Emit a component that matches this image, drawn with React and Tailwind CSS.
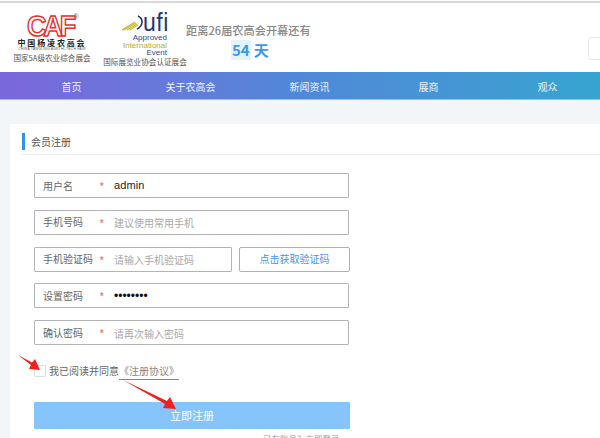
const cjk = "font-['Noto_Sans_CJK_SC','Noto_Sans',sans-serif]";

function Field({ label, value, placeholder, password, className = "w-[315px]" }) {
  return (
    <div className={`flex h-[25px] items-center border border-[#b4b4b4] rounded-[1px] bg-white ${className}`}>
      <span className="w-[56px] pl-[8px] text-[10px] leading-none text-[#666] whitespace-nowrap">{label}</span>
      <span className="w-[23px] pl-[8px] pt-[3px] text-[12px] leading-none text-[#f0706a]">*</span>
      {value ? (
        <span className={`font-['Liberation_Sans',sans-serif] leading-none ${password ? "text-[12px] text-[#111]" : "text-[11px] tracking-[0.1px] text-[#222]"}`}>{value}</span>
      ) : (
        <span className="pt-[2px] text-[10px] leading-none text-[#a8a8a8] whitespace-nowrap">{placeholder}</span>
      )}
    </div>
  );
}

function CafLogo() {
  return (
    <div className="flex w-[84px] flex-col items-center">
      <svg width="58" height="26" viewBox="0 0 58 26" className="ml-[8px]">
        <text x="0" y="24.5" fontFamily="Liberation Sans, sans-serif" fontSize="30" fontWeight="700" fill="#fff" stroke="#e5302c" strokeWidth="1.5" letterSpacing="-3.5" textLength="46" lengthAdjust="spacingAndGlyphs">CAF</text>
        <text x="46" y="8" fontFamily="Liberation Sans, sans-serif" fontSize="8" fill="#777">®</text>
      </svg>
      <span className="mt-[1px] text-[8px] leading-[9px] font-bold tracking-[1.85px] text-[#222] whitespace-nowrap">中国杨凌农高会</span>
      <span className="font-['Liberation_Sans',sans-serif] text-[3.4px] leading-[5px] tracking-[0.2px] text-[#555] whitespace-nowrap">CHINA YANGLING AGRI HI-TECH FAIR</span>
      <span className="mt-[1px] text-[7.6px] leading-[10px] text-[#555] whitespace-nowrap">国家5A级农业综合展会</span>
    </div>
  );
}

function UfiLogo() {
  return (
    <div className="flex w-[84px] flex-col items-center">
      <div className="flex h-[20px] w-[46px] items-end pt-[2px]">
        <svg width="23" height="18" viewBox="0 0 23 18" className="shrink-0">
          <g fill="none" stroke="#c5bb2e" strokeWidth="1.1">
            <path d="M0 17 L13 9" />
            <path d="M2 17 L14 10" />
            <path d="M5 17 L15 11" />
            <path d="M8 17 L16 12" />
          </g>
          <path d="M16 3 C22 6 21 13 15 16" fill="none" stroke="#1f3a7a" strokeWidth="1.6" />
        </svg>
        <span className="-ml-[2px] font-['Liberation_Sans',sans-serif] text-[23px] leading-[18px] tracking-[0.5px] text-[#1f3a7a] scale-y-110">ufi</span>
      </div>
      <div className="mt-[3px] flex w-full flex-col items-end pr-[20px] font-['Liberation_Sans',sans-serif] text-[8px] leading-[7.5px]">
        <span className="text-[#2a4a8c]">Approved</span>
        <span className="text-[#b5ad2c]">International</span>
        <span className="text-[#2a4a8c]">Event</span>
      </div>
      <span className="mt-[0.5px] text-[7.6px] leading-[10px] text-[#555] whitespace-nowrap">国际展览业协会认证展会</span>
    </div>
  );
}

const nav = ["首页", "关于农高会", "新闻资讯", "展商", "观众"];

export default function App() {
  return (
    <div className={`relative h-[438px] w-[600px] overflow-hidden bg-white ${cjk}`}>
      <div className="h-[3px] border-b-2 border-[#d9d9d9]" />
      <header className="relative flex h-[69px] items-start pl-[10px] pt-[8px]">
        <CafLogo />
        <div className="ml-[9px]"><UfiLogo /></div>
        <div className="-ml-[1px] flex w-[130px] flex-col items-start pt-[12px]">
          <span className="text-[11.2px] leading-[14px] font-medium text-[#888] whitespace-nowrap">距离26届农高会开幕还有</span>
          <div className="mt-[3px] ml-[45px] flex items-center text-[15px] leading-[20px] font-semibold text-[#3a9af0]">
            <span className="bg-[#e4f2fd] px-[1px]">54</span>
            <span className="ml-[3px]">天</span>
          </div>
        </div>
        <div className="absolute right-[-8px] top-[34px] h-[23px] w-[20px] rounded-[3px] border border-[#e6e6e6]" />
      </header>
      <nav className="grid h-[28px] grid-cols-[repeat(5,119px)] border-b border-[#8fc0ee] bg-gradient-to-r from-[#7a66dc] via-[#4f88d8] to-[#36a4d0] pl-[12px] pt-[2px]">
        {nav.map((n) => (
          <span key={n} className="flex items-center justify-center text-[10px] leading-none text-[#f0f4fc]">{n}</span>
        ))}
      </nav>
      <main className="h-[339px] bg-[#f3f6f8] pl-[10px] pt-[24px]">
        <section className="h-full bg-white pl-[12px]">
          <div className="h-[31px] border-b border-[#ececec] pt-[9px]">
            <div className="flex h-[17px] items-center border-l-[3px] border-[#2a96e8] pl-[6px] text-[10px] leading-none text-[#555]">会员注册</div>
          </div>
          <div className="flex flex-col gap-[11.75px] pl-[12px] pt-[18px]">
            <Field label="用户名" value="admin" />
            <Field label="手机号码" placeholder="建议使用常用手机" />
            <div className="flex gap-[7px]">
              <Field label="手机验证码" placeholder="请输入手机验证码" className="w-[198px]" />
              <button className="h-[25px] w-[111px] rounded-[2px] border border-[#7dbcf5] text-[10px] leading-none text-[#3f98ec]">点击获取验证码</button>
            </div>
            <Field label="设置密码" value="••••••••" password />
            <Field label="确认密码" placeholder="请再次输入密码" />
          </div>
          <div className="ml-[12px] mt-[20px] flex h-[12px] items-center">
            <span className="h-[12px] w-[12px] rounded-[1px] border border-[#dcdcdc] bg-white" />
            <span className="ml-[3px] text-[10px] leading-none text-[#666] whitespace-nowrap">我已阅读并同意<span className="border-b border-[#888] pb-[1px] text-[#888]">《注册协议》</span></span>
          </div>
          <button className="ml-[12px] mt-[25px] h-[27px] w-[316px] rounded-[1px] bg-[#85c5fb] text-[11px] leading-none text-white">立即注册</button>
          <p className="ml-[241px] mt-[5px] text-[8.5px] leading-none text-[#999] whitespace-nowrap">已有账号？立即登录</p>
        </section>
      </main>
      <svg className="absolute left-0 top-0 pointer-events-none" width="600" height="438" viewBox="0 0 600 438">
        <polygon points="18,355 32,362.5 35,359 40,370 29,369 31,365" fill="#f0201c" />
        <polygon points="123,380 167,401 170,397 176,409 163,408 165,404" fill="#f0201c" />
      </svg>
    </div>
  );
}
